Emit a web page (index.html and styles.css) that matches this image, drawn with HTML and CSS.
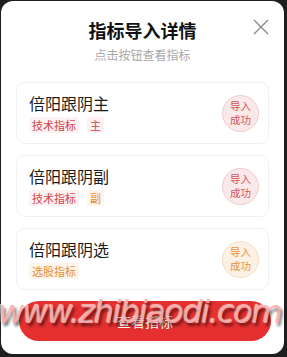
FILE: index.html
```html
<!DOCTYPE html>
<html lang="zh">
<head>
<meta charset="utf-8">
<link rel="stylesheet" href="styles.css">
</head>
<body>
<div class="dialog">
  <div class="header">
    <div class="title">指标导入详情</div>
    <div class="subtitle">点击按钮查看指标</div>
    <svg class="close" width="16" height="16" viewBox="0 0 16 16"><path d="M1 1L15 15M15 1L1 15" stroke="#8a8a8a" stroke-width="1.4" fill="none"/></svg>
  </div>
  <div class="list">
    <div class="card">
      <div class="info">
        <div class="name">倍阳跟阴主</div>
        <div class="tags"><span class="tag red">技术指标</span><span class="tag red">主</span></div>
      </div>
      <div class="badge red"><span>导入</span><span>成功</span></div>
    </div>
    <div class="card">
      <div class="info">
        <div class="name">倍阳跟阴副</div>
        <div class="tags"><span class="tag red">技术指标</span><span class="tag orange">副</span></div>
      </div>
      <div class="badge red"><span>导入</span><span>成功</span></div>
    </div>
    <div class="card">
      <div class="info">
        <div class="name">倍阳跟阴选</div>
        <div class="tags"><span class="tag orange">选股指标</span></div>
      </div>
      <div class="badge orange"><span>导入</span><span>成功</span></div>
    </div>
  </div>
  <div class="btn">查看指标</div>
</div>
<div class="watermark">www.zhibiaodi.com</div>
</body>
</html>
```
FILE: styles.css
```css
* { box-sizing: border-box; }
html, body { margin: 0; padding: 0; }
body {
  width: 287px;
  height: 357px;
  background: #1e1e1e;
  font-family: "Noto Sans CJK SC", "Noto Sans", sans-serif;
  position: relative;
  overflow: hidden;
  padding: 1px 3px 3px 1px;
}
.dialog {
  background: #fff;
  border-radius: 12px;
  height: 353px;
  display: flex;
  flex-direction: column;
  padding: 0 15px 0 15px;
}
.header {
  position: relative;
  display: flex;
  flex-direction: column;
  align-items: center;
  padding-top: 17px;
  height: 81px;
}
.title {
  font-size: 18px;
  line-height: 24px;
  font-weight: 700;
  color: #111;
}
.subtitle {
  margin-top: 5px;
  font-size: 12px;
  line-height: 16px;
  color: #a8a8a8;
}
.close {
  position: absolute;
  right: 0;
  top: 18px;
}
.list {
  display: flex;
  flex-direction: column;
  gap: 11px;
}
.card {
  height: 62px;
  border: 1px solid #f1f1f1;
  border-radius: 9px;
  display: flex;
  align-items: center;
  justify-content: space-between;
  padding: 0 9px 0 12px;
}
.name {
  font-size: 16px;
  line-height: 21px;
  color: #1a1a1a;
}
.tags {
  display: flex;
  gap: 8px;
  margin-top: 3px;
}
.tag {
  font-size: 11px;
  line-height: 16px;
  padding: 0 3px;
  border-radius: 2px;
}
.tag.red { color: #d4434b; background: #fdf1f1; }
.tag.orange { color: #e69038; background: #fdf4ea; }
.badge {
  width: 37px;
  height: 37px;
  border-radius: 50%;
  display: flex;
  flex-direction: column;
  align-items: center;
  justify-content: center;
  font-size: 10.5px;
  line-height: 14px;
}
.badge.red { background: #fbe9e9; border: 1px solid #f0cbcb; color: #d5525a; }
.badge.orange { background: #fdf1e5; border: 1px solid #f4dcc2; color: #e3953f; }
.btn {
  margin: 11px 0 0 3px;
  width: 252px;
  height: 40px;
  border-radius: 20px;
  background: #e5302f;
  color: #fff;
  font-size: 14px;
  display: flex;
  align-items: center;
  justify-content: center;
}
.watermark {
  position: absolute;
  left: -2px;
  top: 293px;
  font-family: "DejaVu Sans", sans-serif;
  font-style: italic;
  font-size: 32px;
  letter-spacing: -1.5px;
  color: rgba(250, 175, 175, 0.9);
  text-shadow: 2px 3px 3px rgba(0, 0, 0, 0.55), -1px -1px 1px rgba(255, 255, 255, 0.7);
  white-space: nowrap;
}
```
